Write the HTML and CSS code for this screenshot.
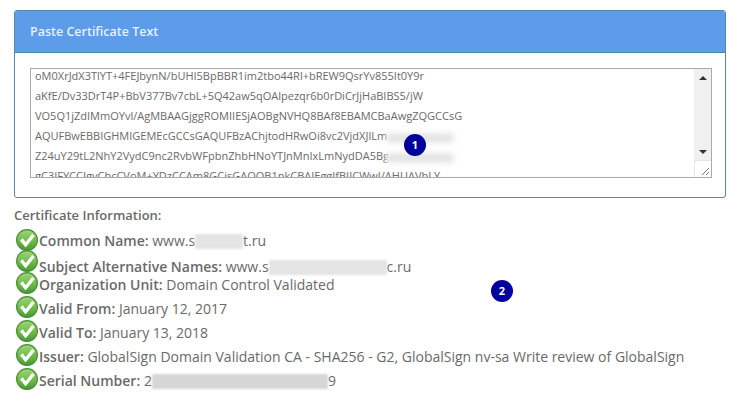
FILE: index.html
```html
<!DOCTYPE html>
<html lang="en">
<head>
<meta charset="utf-8">
<title>Certificate Information</title>
<link rel="stylesheet" href="styles.css">
</head>
<body>
<svg class="defs" width="0" height="0" aria-hidden="true">
  <defs>
    <linearGradient id="g" x1="0" y1="0" x2="0" y2="1">
      <stop offset="0" stop-color="#9fd67a"/>
      <stop offset=".5" stop-color="#73bd4c"/>
      <stop offset="1" stop-color="#439c2e"/>
    </linearGradient>
    <symbol id="ok" viewBox="0 0 22 22">
      <circle cx="11" cy="11" r="10.4" fill="url(#g)" stroke="#4a8c38" stroke-width="1.2"/>
      <path d="M5.4 10.4 L9.6 15.8 L17.4 6" fill="none" stroke="#fff" stroke-width="3.4" stroke-linejoin="miter"/>
    </symbol>
  </defs>
</svg>
<main class="page">
  <section class="panel">
    <h2 class="panel-head">Paste Certificate Text</h2>
    <div class="panel-body">
      <div class="box">
        <textarea class="cert" readonly spellcheck="false">oM0XrJdX3TlYT+4FEJbynN/bUHI5BpBBR1im2tbo44Rl+bREW9QsrYv855It0Y9r
aKfE/Dv33DrT4P+BbV377Bv7cbL+5Q42aw5qOAlpezqr6b0rDiCrJjHaBIBS5/jW
VO5Q1jZdIMmOYvl/AgMBAAGjggROMIIESjAOBgNVHQ8BAf8EBAMCBaAwgZQGCCsG
AQUFBwEBBIGHMIGEMEcGCCsGAQUFBzAChjtodHRwOi8vc2VjdXJlLm
Z24uY29tL2NhY2VydC9nc2RvbWFpbnZhbHNoYTJnMnIxLmNydDA5Bg
gC3IFYCCIgvChcCVoM+YDzCCAm8GCisGAQQB1nkCBAIEggJfBIICWwJ/AHUAVbLY</textarea>
        <div class="bar" aria-hidden="true">
          <div class="track">
            <span class="arrow arrow-up"></span>
            <span class="arrow arrow-down"></span>
          </div>
          <div class="corner">
            <svg width="17" height="17" viewBox="0 0 17 17"><path d="M7 14 L14 7 M11 14 L14 11" stroke="#777" stroke-width="1" fill="none"/></svg>
          </div>
        </div>
        <div class="smudge"></div>
        <div class="smudge-line s1"></div>
        <div class="smudge-line s2"></div>
      </div>
    </div>
  </section>

  <h3 class="info-title">Certificate Information:</h3>
  <ul class="info">
    <li class="row row-a"><svg class="ok"><use href="#ok"/></svg><span class="txt first"><b>Common Name:</b> www.s<i class="blur b1"></i>t.ru</span></li>
    <li class="row row-b"><svg class="ok"><use href="#ok"/></svg><span class="txt low"><b>Subject Alternative Names:</b> www.s<i class="blur b2"></i>c.ru</span></li>
    <li class="row row-c"><svg class="ok"><use href="#ok"/></svg><span class="txt"><b>Organization Unit:</b> Domain Control Validated</span></li>
    <li class="row"><svg class="ok"><use href="#ok"/></svg><span class="txt"><b>Valid From:</b> January 12, 2017</span></li>
    <li class="row"><svg class="ok"><use href="#ok"/></svg><span class="txt"><b>Valid To:</b> January 13, 2018</span></li>
    <li class="row"><svg class="ok"><use href="#ok"/></svg><span class="txt"><b>Issuer:</b> GlobalSign Domain Validation CA - SHA256 - G2, GlobalSign nv-sa Write review of GlobalSign</span></li>
    <li class="row"><svg class="ok"><use href="#ok"/></svg><span class="txt"><b>Serial Number:</b> 2<i class="blur b3"></i>9</span></li>
  </ul>
</main>
<div class="marker m1">1</div>
<div class="marker m2">2</div>
</body>
</html>
```
FILE: styles.css
```css
* { box-sizing: border-box; }
html, body { margin: 0; padding: 0; }
body {
  background: #fff;
  color: #6a6a6a;
  font-family: "Open Sans", "Liberation Sans", sans-serif;
  font-size: 14px;
  width: 740px;
  height: 405px;
  overflow: hidden;
  position: relative;
}
.defs { position: absolute; }
.page { padding: 10px 14px 0; }

.panel {
  border: 1px solid #4f8aa8;
  border-radius: 3px;
  height: 188px;
  overflow: hidden;
}
.panel-head {
  margin: 0;
  height: 42px;
  padding-left: 15px;
  background: #5c9ce8;
  border-bottom: 1px solid #4a86b4;
  color: #e6f0fc;
  font-size: 12.5px;
  font-weight: 600;
  line-height: 41px;
}
.panel-body { padding: 15px 14px 0 15px; }

.box {
  position: relative;
  display: flex;
  width: 682px;
  height: 110px;
  border: 1px solid #aaa;
  overflow: hidden;
}
.cert {
  flex: 1;
  min-width: 0;
  border: 0;
  outline: 0;
  resize: none;
  overflow: hidden;
  white-space: pre;
  margin: -3px 0 0;
  padding: 0 4px;
  color: #6a6a6a;
  background: #fff;
  font-family: "Open Sans", "Liberation Sans", sans-serif;
  font-size: 11px;
  line-height: 20.1px;
}
.bar {
  width: 17px;
  flex: none;
  display: flex;
  flex-direction: column;
}
.track {
  flex: 1;
  background: #f0f0f0;
  display: flex;
  flex-direction: column;
  justify-content: space-between;
  align-items: center;
  padding: 7px 0 6px;
}
.arrow { width: 0; height: 0; border-left: 4px solid transparent; border-right: 4px solid transparent; }
.arrow-up { border-bottom: 4px solid #333; }
.arrow-down { border-top: 4px solid #333; }
.corner { height: 17px; background: #fff; border-left: 1px solid #e4e4e4; border-top: 1px solid #e4e4e4; }
.corner svg { display: block; }

.smudge {
  position: absolute;
  left: 356px;
  top: 60px;
  width: 86px;
  height: 38px;
  background: #fff;
  filter: blur(2px);
}
.smudge-line {
  position: absolute;
  left: 356px;
  width: 66px;
  height: 8px;
  background: #dedede;
  filter: blur(3px);
}
.s1 { top: 65px; }
.s2 { top: 85px; }

.info-title {
  margin: 8px 0 0;
  font-size: 13px;
  font-weight: 600;
  line-height: 18px;
  color: #6a6a6a;
}
.info {
  list-style: none;
  margin: 5px 0 0 2px;
  padding: 0;
}
.row {
  display: flex;
  align-items: center;
  height: 24px;
  white-space: nowrap;
  line-height: 20px;
}
.row-a { height: 22px; margin-top: 1px; }
.row-b { height: 20px; }
.row-c { height: 24px; }
.row b { font-weight: 600; }
.txt { padding-top: 4px; }
.txt.first { padding-top: 2px; }
.txt.low { padding-top: 12px; }
.ok { width: 22px; height: 22px; flex: none; margin-right: 1px; }

.blur {
  display: inline-block;
  height: 15px;
  vertical-align: -3px;
  background: #e4e4e4;
  filter: blur(1px);
}
.b1 { width: 48px; }
.b2 { width: 118px; }
.b3 { width: 176px; background: #d6d6d6; }

.marker {
  position: absolute;
  width: 22px;
  height: 22px;
  border-radius: 50%;
  background: #00009c;
  color: #fff;
  font-size: 11px;
  font-weight: 700;
  line-height: 22px;
  text-align: center;
}
.m1 { left: 404px; top: 134px; }
.m2 { left: 491px; top: 280px; }
```
